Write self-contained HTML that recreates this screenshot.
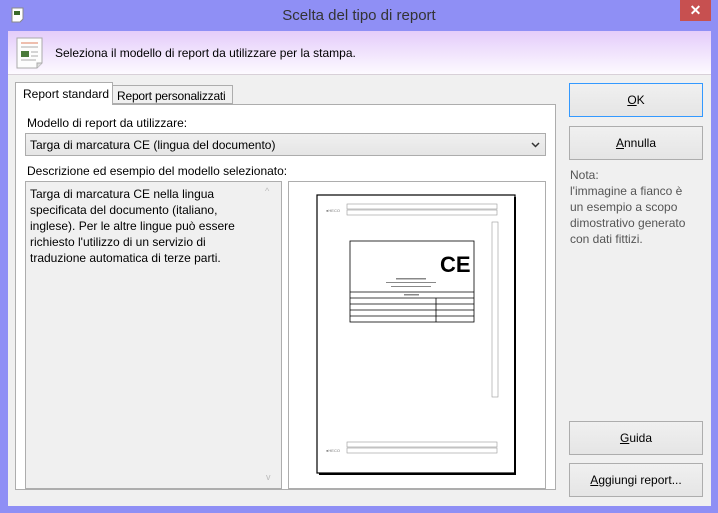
<!DOCTYPE html>
<html><head><style>
*{margin:0;padding:0;box-sizing:border-box}
body{width:718px;height:513px;background:#8f8ff5;font-family:"Liberation Sans",sans-serif;font-size:12px;color:#000;position:relative;overflow:hidden}
.abs{position:absolute;white-space:nowrap}
.title{left:0;top:0;width:718px;height:31px;text-align:center;line-height:32px;font-size:15px;color:#333}
.close{left:680px;top:0;width:31px;height:21px;background:#c75050;color:#fff;text-align:center;font-size:14px;line-height:21px;font-weight:bold}
.client{left:8px;top:31px;width:703px;height:475px;background:#f0f0f0}
.hdr{left:8px;top:31px;width:703px;height:44px;background:linear-gradient(#e4ccfa,#fdfaff);border-bottom:1px solid #d8d0d8}
.btn{position:absolute;left:569px;width:134px;height:34px;border:1px solid #adadad;background:linear-gradient(#f0f0f0,#e5e5e5);text-align:center;line-height:32px;font-size:12px}
u{text-decoration:underline}
.panel{left:15px;top:104px;width:541px;height:386px;background:#fff;border:1px solid #adadad}
</style></head><body>
<div class="abs title">Scelta del tipo di report</div>
<div class="abs close">✕</div>
<svg class="abs" style="left:11px;top:7px" width="14" height="16"><path d="M1 1h11v11l-3 3H1z" fill="#fff" stroke="#888"/><rect x="3" y="4" width="6" height="4" fill="#3a6a2a"/></svg>
<div class="abs client"></div>
<div class="abs hdr"></div>
<svg class="abs" style="left:16px;top:37px" width="28" height="32"><path d="M1 1h25v25l-5 5H1z" fill="#fdfdfd" stroke="#aaa"/><path d="M26 26h-5v5" fill="#ddd" stroke="#aaa"/><line x1="5" y1="6" x2="22" y2="6" stroke="#e08060"/><line x1="5" y1="10" x2="22" y2="10" stroke="#aaa"/><rect x="5" y="14" width="8" height="6" fill="#4a7a3a"/><line x1="15" y1="15" x2="22" y2="15" stroke="#aaa"/><line x1="15" y1="19" x2="22" y2="19" stroke="#aaa"/><line x1="5" y1="23" x2="20" y2="23" stroke="#aaa"/></svg>
<div class="abs" style="left:55px;top:46px;font-size:12px">Seleziona il modello di report da utilizzare per la stampa.</div>
<div class="abs panel"></div>
<div class="abs" style="left:15px;top:82px;width:98px;height:23px;background:#fff;border:1px solid #adadad;border-bottom:none;padding:4px 0 0 7px">Report standard</div>
<div class="abs" style="left:113px;top:85px;width:120px;height:19px;background:#f0f0f0;border:1px solid #adadad;border-left:none;padding:3px 0 0 4px;letter-spacing:-0.2px">Report personalizzati</div>
<div class="abs" style="left:27px;top:116px">Modello di report da utilizzare:</div>
<div class="abs" style="left:25px;top:133px;width:521px;height:23px;border:1px solid #acacac;background:linear-gradient(#f0f0f0,#e5e5e5);padding:4px 0 0 4px">Targa di marcatura CE (lingua del documento)</div>
<svg class="abs" style="left:531px;top:142px" width="9" height="6"><path d="M1 1l3.5 3.5L8 1" fill="none" stroke="#333" stroke-width="1.5"/></svg>
<div class="abs" style="left:27px;top:164px">Descrizione ed esempio del modello selezionato:</div>
<div class="abs" style="left:25px;top:181px;width:257px;height:308px;border:1px solid #adadad;background:#f0f0f0"></div>
<div class="abs" style="left:30px;top:186px;line-height:16px;width:235px;white-space:normal">Targa di marcatura CE nella lingua specificata del documento (italiano, inglese). Per le altre lingue può essere richiesto l'utilizzo di un servizio di traduzione automatica di terze parti.</div>
<div class="abs" style="left:265px;top:186px;color:#bbb;font-size:9px">^</div>
<div class="abs" style="left:266px;top:472px;color:#bbb;font-size:9px">v</div>
<div class="abs" style="left:288px;top:181px;width:258px;height:308px;border:1px solid #adadad;background:#fff"></div>
<svg class="abs" style="left:316px;top:194px" width="202" height="282">
<rect x="1" y="1" width="198" height="278" fill="#fff" stroke="#000" stroke-width="1.2"/>
<rect x="198" y="3" width="2" height="278" fill="#000"/>
<rect x="3" y="279" width="197" height="2" fill="#000"/>
<g stroke="#999" stroke-width="0.6" fill="none">
<rect x="31" y="10" width="150" height="5"/><rect x="31" y="16" width="150" height="5"/>
<rect x="176" y="28" width="6" height="175"/>
<rect x="31" y="248" width="150" height="5"/><rect x="31" y="254" width="150" height="5"/>
</g>
<text x="10" y="18" font-size="4" fill="#777">●HECO</text>
<text x="10" y="258" font-size="4" fill="#777">●HECO</text>
<g stroke="#000" fill="none" stroke-width="0.8">
<rect x="34" y="47" width="124" height="81"/><line x1="34" y1="98" x2="158" y2="98"/><line x1="34" y1="104" x2="158" y2="104"/>
<line x1="34" y1="110" x2="158" y2="110"/><line x1="34" y1="116" x2="158" y2="116"/><line x1="34" y1="122" x2="158" y2="122"/>
<line x1="120" y1="104" x2="120" y2="128"/>
</g>
<text x="124" y="78" font-size="22" font-weight="bold" fill="#000" font-family="Liberation Sans">CE</text>
<g fill="#888"><rect x="80" y="84" width="30" height="1.5"/><rect x="70" y="88" width="50" height="1"/><rect x="75" y="92" width="40" height="1"/><rect x="88" y="100" width="15" height="1.5"/></g>
</svg>
<div class="btn" style="top:83px;border-color:#3399ff"><u>O</u>K</div>
<div class="btn" style="top:126px"><u>A</u>nnulla</div>
<div class="abs" style="left:570px;top:167px;line-height:16px;color:#555">Nota:<br>l'immagine a fianco è<br>un esempio a scopo<br>dimostrativo generato<br>con dati fittizi.</div>
<div class="btn" style="top:421px"><u>G</u>uida</div>
<div class="btn" style="top:463px"><u>A</u>ggiungi report...</div>
</body></html>
